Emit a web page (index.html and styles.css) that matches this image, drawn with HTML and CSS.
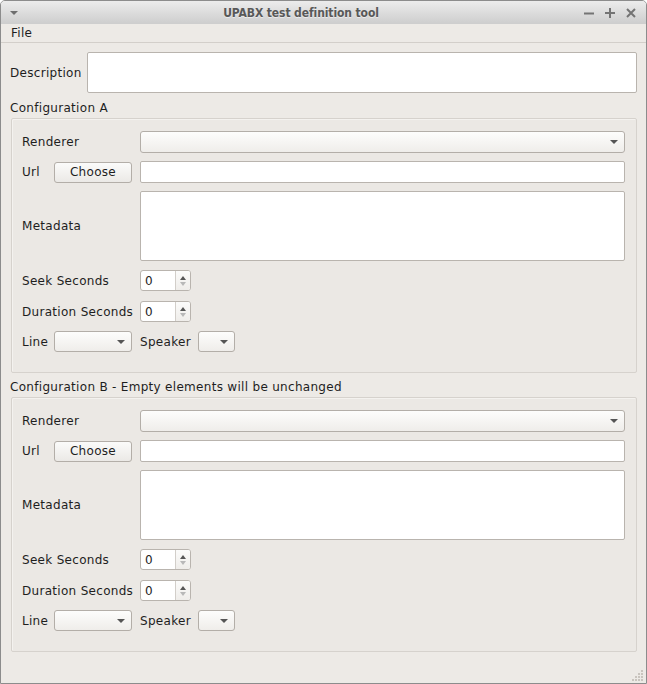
FILE: index.html
```html
<!DOCTYPE html>
<html>
<head>
<meta charset="utf-8">
<title>UPABX test definition tool</title>
<link rel="stylesheet" href="styles.css">
</head>
<body>
<div class="window">
  <div class="titlebar">
    <span class="menu-tri"></span>
    <span class="title">UPABX test definition tool</span>
    <div class="wbtns">
      <svg width="10" height="10" viewBox="0 0 10 10"><path d="M0 5.5H10" stroke="#747474" stroke-width="2"/></svg>
      <svg width="10" height="10" viewBox="0 0 10 10"><path d="M0 5H10M5 0V10" stroke="#747474" stroke-width="2"/></svg>
      <svg width="10" height="10" viewBox="0 0 10 10"><path d="M1 1L9 9M9 1L1 9" stroke="#747474" stroke-width="2"/></svg>
    </div>
  </div>
  <div class="menubar"><span class="menu-item">File</span></div>
  <div class="content">
    <div class="desc-row">
      <span class="desc-label">Description</span>
      <div class="textbox desc-box"></div>
    </div>

    <div class="group-title">Configuration A</div>
    <div class="group">
      <div class="row">
        <span class="lbl">Renderer</span>
        <div class="combo field r22"><span class="arrow"></span></div>
      </div>
      <div class="row mt8">
        <div class="lbl"><span class="short">Url</span><div class="button">Choose</div></div>
        <div class="textbox field r22"></div>
      </div>
      <div class="row mt8">
        <span class="lbl">Metadata</span>
        <div class="textbox field r70"></div>
      </div>
      <div class="row mt9">
        <span class="lbl">Seek Seconds</span>
        <div class="spin"><span class="spin-val">0</span><div class="spin-btns"><span class="up"></span><span class="down"></span></div></div>
      </div>
      <div class="row mt10">
        <span class="lbl">Duration Seconds</span>
        <div class="spin"><span class="spin-val">0</span><div class="spin-btns"><span class="up"></span><span class="down"></span></div></div>
      </div>
      <div class="row mt9">
        <div class="lbl"><span class="short">Line</span><div class="combo small-combo"><span class="arrow sm"></span></div></div>
        <span class="speaker">Speaker</span>
        <div class="combo tiny-combo"><span class="arrow sm"></span></div>
      </div>
    </div>

    <div class="group-title gt2">Configuration B - Empty elements will be unchanged</div>
    <div class="group">
      <div class="row">
        <span class="lbl">Renderer</span>
        <div class="combo field r22"><span class="arrow"></span></div>
      </div>
      <div class="row mt8">
        <div class="lbl"><span class="short">Url</span><div class="button">Choose</div></div>
        <div class="textbox field r22"></div>
      </div>
      <div class="row mt8">
        <span class="lbl">Metadata</span>
        <div class="textbox field r70"></div>
      </div>
      <div class="row mt9">
        <span class="lbl">Seek Seconds</span>
        <div class="spin"><span class="spin-val">0</span><div class="spin-btns"><span class="up"></span><span class="down"></span></div></div>
      </div>
      <div class="row mt10">
        <span class="lbl">Duration Seconds</span>
        <div class="spin"><span class="spin-val">0</span><div class="spin-btns"><span class="up"></span><span class="down"></span></div></div>
      </div>
      <div class="row mt9">
        <div class="lbl"><span class="short">Line</span><div class="combo small-combo"><span class="arrow sm"></span></div></div>
        <span class="speaker">Speaker</span>
        <div class="combo tiny-combo"><span class="arrow sm"></span></div>
      </div>
    </div>
  </div>
  <svg class="grip" width="12" height="12" viewBox="0 0 12 12">
    <g fill="#c9c4be">
      <rect x="9" y="1" width="2" height="2"/>
      <rect x="6" y="4" width="2" height="2"/><rect x="9" y="4" width="2" height="2"/>
      <rect x="3" y="7" width="2" height="2"/><rect x="6" y="7" width="2" height="2"/><rect x="9" y="7" width="2" height="2"/>
      <rect x="0" y="10" width="2" height="2"/><rect x="3" y="10" width="2" height="2"/><rect x="6" y="10" width="2" height="2"/><rect x="9" y="10" width="2" height="2"/>
    </g>
  </svg>
</div>
</body>
</html>
```

FILE: styles.css
```css
* { box-sizing: border-box; }
html, body { margin: 0; padding: 0; background: #ffffff; }
body {
  font-family: "DejaVu Sans", "Liberation Sans", sans-serif;
  font-size: 12px;
  letter-spacing: 0.3px;
  color: #1e1e1e;
}
.window {
  width: 647px;
  height: 684px;
  background: #edeae6;
  border: 1px solid #8c8c8c;
  border-radius: 5px 5px 0 0;
  position: relative;
  overflow: hidden;
  display: flex;
  flex-direction: column;
}
.titlebar {
  height: 23px;
  flex: none;
  background: linear-gradient(#ececec, #cdcdcd);
  display: flex;
  align-items: center;
  padding: 0 10px 0 9px;
}
.menu-tri {
  width: 0; height: 0;
  border-left: 4px solid transparent;
  border-right: 4px solid transparent;
  border-top: 4px solid #6e6e6e;
  margin-top: 1px;
}
.title {
  flex: 1;
  text-align: center;
  font-family: "DejaVu Sans Condensed", "DejaVu Sans", sans-serif;
  font-stretch: condensed;
  font-weight: bold;
  font-size: 12px;
  letter-spacing: -0.1px;
  color: #585858;
  text-shadow: 0 1px 0 rgba(255,255,255,0.5);
}
.wbtns {
  display: flex;
  gap: 11px;
  align-items: center;
}
.wbtns svg { display: block; }
.menubar {
  height: 19px;
  flex: none;
  border-bottom: 1px solid #d3cfca;
  padding-left: 10px;
  display: flex;
  align-items: center;
  line-height: 14px;
}
.content {
  padding: 9px 9px 0 9px;
  display: flex;
  flex-direction: column;
}
.desc-row {
  display: flex;
  align-items: center;
}
.desc-label { width: 77px; }
.textbox {
  background: #ffffff;
  border: 1px solid #b9b4ae;
  border-radius: 2px;
}
.desc-box { flex: 1; height: 41px; }
.group-title {
  margin-top: 8px;
  line-height: 14px;
  height: 14px;
}
.gt2 { margin-top: 7px; }
.group {
  margin-top: 3px;
  margin-left: 1px;
  border: 1px solid #d6d2cd;
  border-radius: 2px;
  background: #ebe8e4;
  box-shadow: inset 1px 1px 0 #f4f2ef;
  padding: 12px 11px 20px 10px;
}
.row {
  display: flex;
  align-items: center;
}
.mt8 { margin-top: 8px; }
.mt9 { margin-top: 9px; }
.mt10 { margin-top: 10px; }
.lbl {
  width: 118px;
  flex: none;
  display: flex;
  align-items: center;
}
.short { width: 32px; flex: none; }
.field { flex: 1; }
.r22 { height: 22px; }
.r70 { height: 70px; }
.combo {
  position: relative;
  background: linear-gradient(#fdfdfc, #efedea);
  border: 1px solid #b3aea8;
  border-radius: 3px;
}
.arrow {
  position: absolute;
  right: 6px;
  top: 50%;
  margin-top: -2px;
  width: 0; height: 0;
  border-left: 4px solid transparent;
  border-right: 4px solid transparent;
  border-top: 4px solid #555555;
}
.small-combo { width: 78px; height: 21px; }
.tiny-combo { width: 37px; height: 21px; }
.speaker { width: 58px; flex: none; }
.button {
  width: 78px;
  height: 21px;
  background: linear-gradient(#fbfbfa, #ebe9e6);
  border: 1px solid #b3aea8;
  border-radius: 3px;
  display: flex;
  align-items: center;
  justify-content: center;
}
.spin {
  width: 51px;
  height: 21px;
  display: flex;
  background: #ffffff;
  border: 1px solid #b9b4ae;
  border-radius: 3px;
  overflow: hidden;
}
.spin-val {
  flex: 1;
  padding-left: 4px;
  display: flex;
  align-items: center;
}
.spin-btns {
  width: 15px;
  border-left: 1px solid #d2cec9;
  background: linear-gradient(#fbfbfa, #efedea);
  display: flex;
  flex-direction: column;
  align-items: center;
  justify-content: space-around;
  padding: 4px 0 3px;
}
.up {
  width: 0; height: 0;
  border-left: 3.5px solid transparent;
  border-right: 3.5px solid transparent;
  border-bottom: 4px solid #555555;
}
.down {
  width: 0; height: 0;
  border-left: 3.5px solid transparent;
  border-right: 3.5px solid transparent;
  border-top: 4px solid #b8b8b8;
}
.grip {
  position: absolute;
  right: 2px;
  bottom: 2px;
}
```
